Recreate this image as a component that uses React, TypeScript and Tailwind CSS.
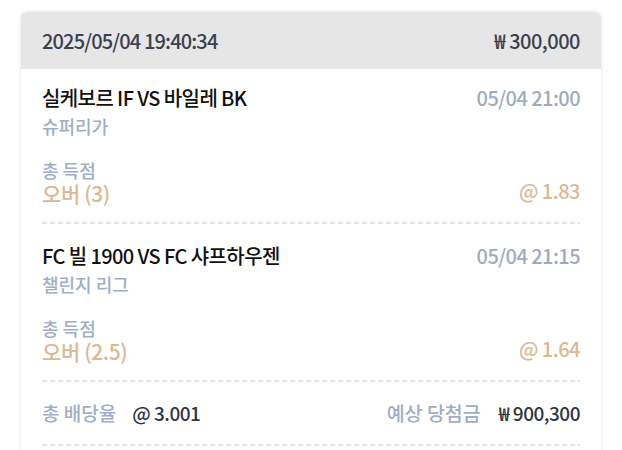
const bets = [
  {
    match: "실케보르 IF VS 바일레 BK",
    league: "슈퍼리가",
    time: "05/04 21:00",
    market: "총 득점",
    pick: "오버 (3)",
    odds: "@ 1.83",
  },
  {
    match: "FC 빌 1900 VS FC 샤프하우젠",
    league: "챌린지 리그",
    time: "05/04 21:15",
    market: "총 득점",
    pick: "오버 (2.5)",
    odds: "@ 1.64",
  },
];

function Dashed() {
  return (
    <div className="h-[2px] w-full bg-[linear-gradient(to_right,#e2e2e2_65%,transparent_0)] bg-[length:8px_2px] bg-repeat-x" />
  );
}

export default function App() {
  return (
    <div className="min-h-[450px] bg-white pt-3 font-['Noto_Sans_CJK_KR',sans-serif]">
      <div className="mx-[21px] overflow-hidden rounded-md bg-white shadow-[0_0_4px_rgba(0,0,0,0.12)]">
        <div className="flex h-[57px] items-center justify-between bg-[#e6e6e6] px-[21px] text-[20px] font-medium text-[#3a4150]">
          <span className="tracking-[-0.85px]">2025/05/04 19:40:34</span>
          <span className="tracking-[-0.5px]">₩ 300,000</span>
        </div>

        <div className="px-[21px]">
          {bets.map((bet, i) => (
            <div key={bet.match}>
              <div className={i === 0 ? "pt-[15px] pb-[17px]" : "pt-[18px] pb-[17px]"}>
                <div className="flex items-center justify-between text-[20px] leading-[28px] font-medium">
                  <span className="tracking-[-0.6px] text-[#111]">{bet.match}</span>
                  <span className="tracking-[-0.55px] text-[#9eabbf]">{bet.time}</span>
                </div>
                <div className="text-[18px] leading-[28px] font-medium text-[#9eaec6]">
                  {bet.league}
                </div>
                <div className="mt-[19px] text-[18px] leading-[22px] font-medium text-[#9eaec6]">
                  {bet.market}
                </div>
                <div className="flex items-center justify-between text-[20px] leading-[24px] font-medium text-[#dcb892]">
                  <span className="text-[21px] leading-[24px] tracking-[-0.4px]">{bet.pick}</span>
                  <span className="-translate-y-[2px] tracking-[-0.5px]">{bet.odds}</span>
                </div>
              </div>
              <Dashed />
            </div>
          ))}

          <div className="flex items-center justify-between py-[17px] text-[19px] leading-[28px] font-medium">
            <div className="flex items-center gap-4">
              <span className="text-[#9eaec6]">총 배당율</span>
              <span className="tracking-[-0.5px] text-[#2f3542]">@ 3.001</span>
            </div>
            <div className="flex items-center gap-[18px]">
              <span className="text-[19.5px] text-[#9eaec6]">예상 당첨금</span>
              <span className="tracking-[-0.5px] text-[#2f3542]">₩ 900,300</span>
            </div>
          </div>
          <Dashed />
          <div className="h-8" />
        </div>
      </div>
    </div>
  );
}
